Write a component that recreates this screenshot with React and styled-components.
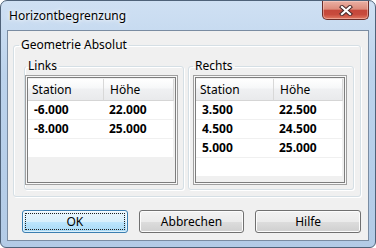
import React from "react";
import styled, { createGlobalStyle } from "styled-components";

const GlobalStyle = createGlobalStyle`
  html, body {
    margin: 0;
    padding: 0;
    background: #ffffff;
  }
  body {
    font-family: "Noto Sans", "Open Sans", sans-serif;
    font-size: 12px;
    color: #000;
  }
`;

const links = [
  ["-6.000", "22.000"],
  ["-8.000", "25.000"],
  ["", ""],
];

const rechts = [
  ["3.500", "22.500"],
  ["4.500", "24.500"],
  ["5.000", "25.000"],
  ["", ""],
];

function CloseIcon() {
  return (
    <svg width="14" height="11" viewBox="0 0 14 11">
      <g strokeLinecap="square">
        <path d="M3 2 L11 9 M11 2 L3 9" stroke="#4a2a2a" strokeWidth="4.2" />
        <path d="M3 2 L11 9 M11 2 L3 9" stroke="#ffffff" strokeWidth="2.2" />
      </g>
    </svg>
  );
}

function Table({ rows, col1, margin, legend, legendOffset }) {
  return (
    <Group $width={legend.width}>
      <Legend $offset={legendOffset}>{legend.text}</Legend>
      <ListView $margin={margin}>
        <Grid $col1={col1}>
          <HeaderCell>Station</HeaderCell>
          <HeaderCell>Höhe</HeaderCell>
          {rows.map((r, i) => (
            <React.Fragment key={i}>
              <Cell>{r[0]}</Cell>
              <Cell>{r[1]}</Cell>
            </React.Fragment>
          ))}
        </Grid>
      </ListView>
    </Group>
  );
}

export default function App() {
  return (
    <>
      <GlobalStyle />
      <Window>
        <TitleBar>
          <Title>Horizontbegrenzung</Title>
          <CloseButton>
            <CloseIcon />
          </CloseButton>
        </TitleBar>
        <Client>
          <OuterGroup>
            <Legend $offset={5}>Geometrie Absolut</Legend>
            <Columns>
              <Table
                rows={links}
                col1="76px"
                margin="1px 5px 0 0"
                legend={{ text: "Links", width: 160 }}
                legendOffset={1}
              />
              <Table
                rows={rechts}
                col1="78px"
                margin="1px 6px 0 4px"
                legend={{ text: "Rechts", width: 166 }}
                legendOffset={4}
              />
            </Columns>
          </OuterGroup>
          <Buttons>
            <Button $default>
              <Focus>OK</Focus>
            </Button>
            <Button>Abbrechen</Button>
            <Button>Hilfe</Button>
          </Buttons>
        </Client>
      </Window>
    </>
  );
}

const Window = styled.div`
  box-sizing: border-box;
  width: 376px;
  height: 248px;
  border: 1px solid #4f6279;
  border-radius: 7px 7px 6px 6px;
  background: linear-gradient(
    180deg,
    #cfe0f3 0%,
    #bcd3ec 30%,
    #b6cee9 70%,
    #b3cbe6 100%
  );
  display: flex;
  flex-direction: column;
  overflow: hidden;
`;

const TitleBar = styled.div`
  height: 29px;
  display: flex;
  justify-content: space-between;
  align-items: flex-start;
  padding: 0 6px 0 8px;
`;

const Title = styled.div`
  line-height: 30px;
  font-size: 12px;
  text-shadow: 0 0 6px rgba(255, 255, 255, 0.95), 0 0 3px rgba(255, 255, 255, 0.9);
`;

const CloseButton = styled.div`
  box-sizing: border-box;
  width: 47px;
  height: 19px;
  border: 1px solid #6b2e2a;
  border-top: none;
  border-radius: 0 0 5px 5px;
  background: linear-gradient(
    180deg,
    #eab0a4 0%,
    #dd8c7c 45%,
    #c5473a 52%,
    #c84b3d 75%,
    #e17a63 100%
  );
  box-shadow: inset 0 0 0 1px rgba(255, 220, 210, 0.45);
  display: flex;
  align-items: center;
  justify-content: center;
`;

const Client = styled.div`
  flex: 1;
  margin: 0 6px 6px;
  border: 1px solid #7a8ca2;
  background: #f0f0f0;
  padding: 6px 7px 0 5px;
  display: flex;
  flex-direction: column;
`;

const OuterGroup = styled.fieldset`
  box-sizing: border-box;
  height: 160px;
  margin: 0;
  padding: 0;
  min-width: 0;
  border: 1px solid #d5dfe5;
  border-radius: 3px;
  box-shadow: 1px 1px 0 #ffffff, inset 1px 1px 0 #ffffff;
`;

const Group = styled(OuterGroup)`
  width: ${(p) => p.$width}px;
  height: 132px;
  flex: none;
`;

const Legend = styled.legend`
  margin-left: ${(p) => p.$offset}px;
  padding: 0 2px;
  line-height: 16px;
  font-size: 12px;
  color: #000;
`;

const Columns = styled.div`
  display: flex;
  gap: 4px;
  padding: 5px 6px 0 10px;
`;

const ListView = styled.div`
  box-sizing: border-box;
  height: 110px;
  margin: ${(p) => p.$margin};
  border: 1px solid #a0a0a0;
  box-shadow: inset 0 0 0 1px #f8f8f8, inset 0 0 0 2px #7d7d7d;
  background: #f0f0f0;
  padding: 3px 3px 0 2px;
`;

const Grid = styled.div`
  display: grid;
  grid-template-columns: ${(p) => p.$col1} 1fr;
  grid-auto-rows: 19px;
  grid-template-rows: 22px;
`;

const HeaderCell = styled.div`
  box-sizing: border-box;
  padding-left: 4px;
  line-height: 21px;
  background: linear-gradient(180deg, #ffffff 0%, #f7f8f9 40%, #eff0f2 50%, #e9eaec 100%);
  border-bottom: 1px solid #d5d5d5;
  border-right: 1px solid #d8d8d8;
  white-space: nowrap;

  & + & {
    padding-left: 6px;
  }
`;

const Cell = styled.div`
  box-sizing: border-box;
  background: #ffffff;
  border-bottom: 1px solid #f0f0f0;
  padding-left: 5px;
  line-height: 18px;
  font-weight: bold;
  white-space: nowrap;

  &:nth-child(odd) {
    padding-left: 6px;
  }
  &:nth-child(even) {
    border-right: 1px solid #f0f0f0;
  }
`;

const Buttons = styled.div`
  display: flex;
  gap: 11px;
  margin-top: 13px;
  padding-left: 9px;
`;

const Button = styled.div`
  box-sizing: border-box;
  width: 106px;
  height: 23px;
  border: 1px solid ${(p) => (p.$default ? "#3c7fb1" : "#707070")};
  border-radius: 3px;
  background: ${(p) =>
    p.$default
      ? "linear-gradient(180deg, #eaf6fd 0%, #d9f0fc 50%, #bee6fd 51%, #a7d9f5 100%)"
      : "linear-gradient(180deg, #f2f2f2 0%, #ebebeb 50%, #dddddd 51%, #cfcfcf 100%)"};
  box-shadow: inset 0 0 0 1px
    ${(p) => (p.$default ? "rgba(255,255,255,0.6)" : "#fcfcfc")};
  display: flex;
  align-items: center;
  justify-content: center;
  font-size: 12px;
  line-height: 21px;
  padding: ${(p) => (p.$default ? "2px" : "0")};
`;

const Focus = styled.div`
  flex: 1;
  align-self: stretch;
  border: 1px dotted #202020;
  display: flex;
  align-items: center;
  justify-content: center;
  line-height: 15px;
`;
